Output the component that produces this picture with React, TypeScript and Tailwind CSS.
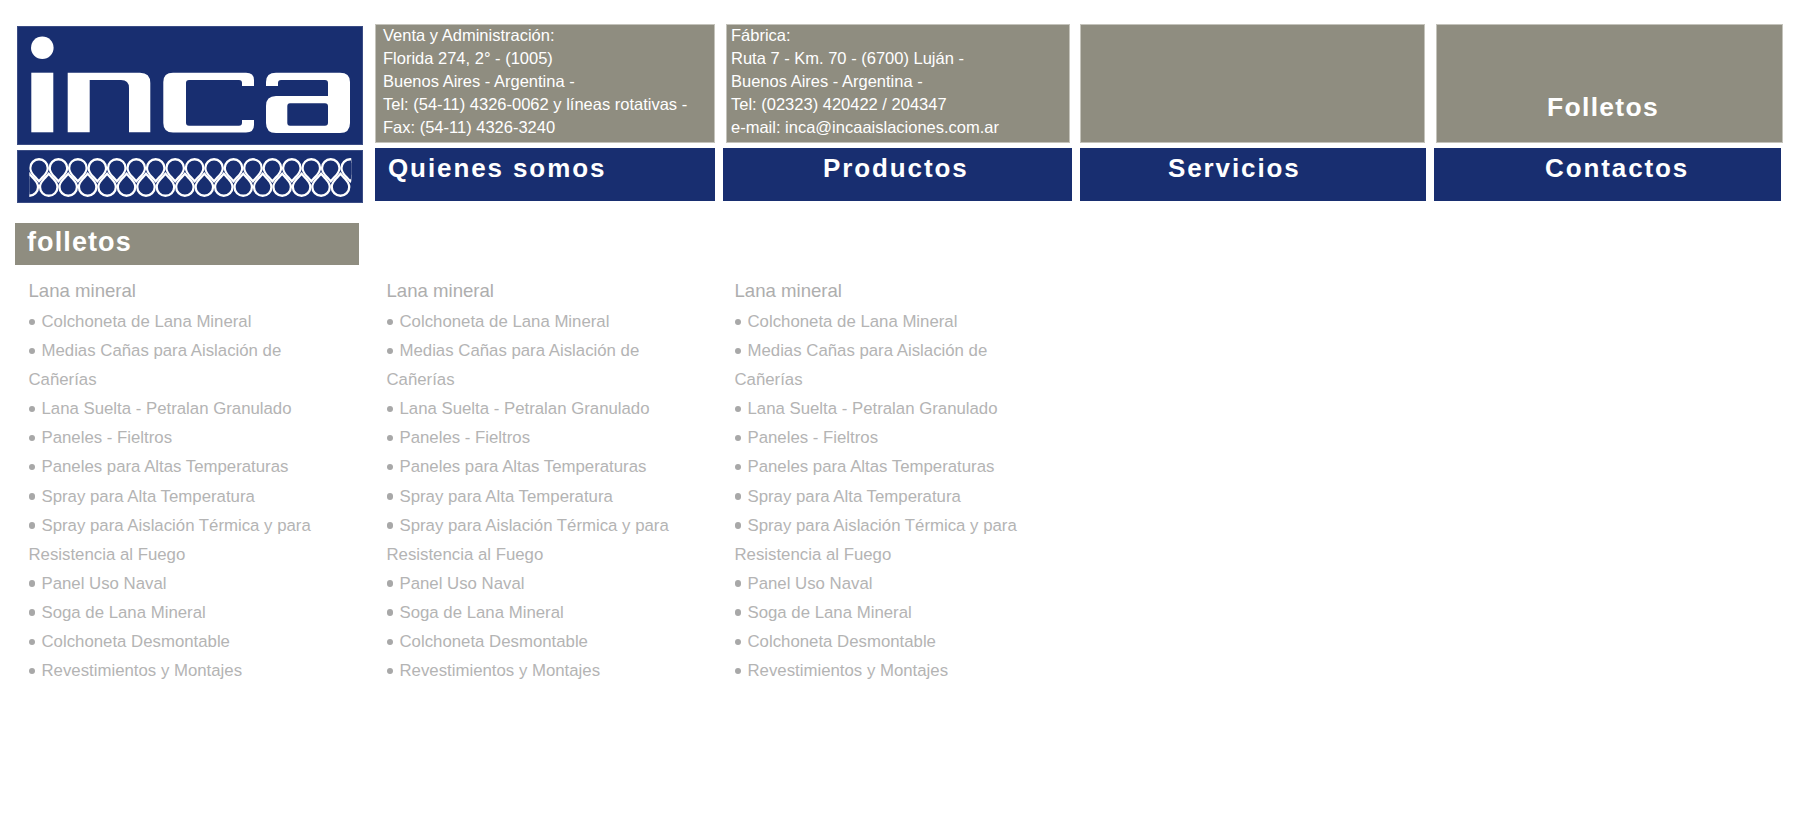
const navy = "bg-[#182e70]";

const linea = [
  "Colchoneta de Lana Mineral",
  "Medias Cañas para Aislación de Cañerías",
  "Lana Suelta - Petralan Granulado",
  "Paneles - Fieltros",
  "Paneles para Altas Temperaturas",
  "Spray para Alta Temperatura",
  "Spray para Aislación Térmica y para Resistencia al Fuego",
  "Panel Uso Naval",
  "Soga de Lana Mineral",
  "Colchoneta Desmontable",
  "Revestimientos y Montajes",
];

const Logo = () => (
  <div className={`${navy} h-[119px] w-[346px] border border-[#3a4c84]`}>
    <svg viewBox="18 27 344 117" className="block h-full w-full" fill="white">
      <circle cx="42.3" cy="47.7" r="11.3" />
      <rect x="31.3" y="72.7" width="22" height="59.6" />
      <path d="M67.7 132.3V72.7H140Q150.3 72.7 150.3 83V132.3H129V88Q129 80 121 80H89.7V132.3Z" />
      <path d="M173 72.7H246Q254 72.7 254 80V86H242V83Q242 80 239 80H189Q186 80 186 83V122.7Q186 125.7 189 125.7H239Q242 125.7 242 122.7V120H254V125Q254 132.5 246 132.5H173Q163.3 132.5 163.3 123V82Q163.3 72.7 173 72.7Z" />
      <path
        fillRule="evenodd"
        d="M266 86V82Q266 72.7 276 72.7H340Q350 72.7 350 82V123Q350 133 340 133H276Q266 133 266 123V106Q266 96 276 96H328V83Q328 80 325 80H281Q278 80 278 83V86ZM290 103.3H325Q328 103.3 328 106.3V122.7Q328 125.7 325 125.7H290Q287.3 125.7 287.3 122.7V106.3Q287.3 103.3 290 103.3Z"
      />
    </svg>
  </div>
);

// malla del logo: gotas en dos filas, primero el contorno blanco y encima el hueco azul
const Malla = () => {
  const r = 7.6;
  const arriba = Array.from({ length: 17 }, (_, i) => 39 + i * 19.45);
  const abajo = Array.from({ length: 17 }, (_, i) => 29.3 + i * 19.45);
  const gotas = [
    ...arriba.map(
      (x) =>
        `M${x - r} 168A${r} ${r} 0 1 1 ${x + r} 168C${x + r} 172.5 ${x + 3} 176 ${x} 179.5C${x - 3} 176 ${x - r} 172.5 ${x - r} 168Z`,
    ),
    ...abajo.map(
      (x) =>
        `M${x - r} 187A${r} ${r} 0 1 0 ${x + r} 187C${x + r} 182.5 ${x + 3} 179 ${x} 175.5C${x - 3} 179 ${x - r} 182.5 ${x - r} 187Z`,
    ),
  ];
  return (
    <div className={`${navy} mt-[5px] h-[53px] w-[346px] border border-[#3a4c84]`}>
      <svg viewBox="18 151 344 51" className="block h-full w-full">
        <defs>
          <clipPath id="malla">
            <rect x="29.3" y="155" width="322" height="44" />
          </clipPath>
        </defs>
        <g clipPath="url(#malla)">
          {gotas.map((d) => (
            <path key={d} d={d} fill="white" stroke="white" strokeWidth="4.6" />
          ))}
          {gotas.map((d) => (
            <path key={d} d={d} fill="#182e70" />
          ))}
        </g>
      </svg>
    </div>
  );
};

const Gris = ({ width, children }: { width: string; children?: React.ReactNode }) => (
  <div className={`${width} h-[119px] border border-[#c4c3bb] bg-[#8f8d80] text-[16.5px] leading-[23px] text-white`}>
    {children}
  </div>
);

const Azul = ({ width, children, align }: { width: string; children: React.ReactNode; align: string }) => (
  <div className={`${width} ${navy} ${align} h-[53px] pt-[4px] text-[26px] leading-[32px] font-bold tracking-[1.9px] text-white`}>
    {children}
  </div>
);

const Columna = ({ width }: { width: string }) => (
  <div className={width}>
    <h3 className="mb-[2px] text-[18.6px] leading-[29px] font-normal text-[#aeaeae]">Lana mineral</h3>
    <ul className="w-[300px] text-[16.8px] leading-[29.1px] text-[#b4b4b4]">
      {linea.map((item) => (
        <li key={item}>
          <span className="mr-[6.5px] inline-block size-[6.5px] rounded-full bg-[#a8a8a8] align-[2px]" />
          {item}
        </li>
      ))}
    </ul>
  </div>
);

export default function App() {
  return (
    <div className="min-h-[815px] bg-white font-['Liberation_Sans',Arial,sans-serif]">
      <header className="flex pl-[17px] pt-[24px]">
        <div className="mt-[2px]">
          <Logo />
          <Malla />
        </div>
        <div className="ml-[12px]">
          <div className="flex">
            <Gris width="w-[340px]">
              <p className="-mt-[1px] pl-[7px]">
                Venta y Administración:
                <br />
                Florida 274, 2° - (1005)
                <br />
                Buenos Aires - Argentina -
                <br />
                Tel: (54-11) 4326-0062 y líneas rotativas -
                <br />
                Fax: (54-11) 4326-3240
              </p>
            </Gris>
            <div className="ml-[11px]">
              <Gris width="w-[344px]">
                <p className="-mt-[1px] pl-[4px]">
                  Fábrica:
                  <br />
                  Ruta 7 - Km. 70 - (6700) Luján -
                  <br />
                  Buenos Aires - Argentina -
                  <br />
                  Tel: (02323) 420422 / 204347
                  <br />
                  e-mail: inca@incaaislaciones.com.ar
                </p>
              </Gris>
            </div>
            <div className="ml-[10px]">
              <Gris width="w-[345px]" />
            </div>
            <div className="ml-[11px]">
              <Gris width="w-[347px]">
                <p className="pl-[110px] pt-[66px] text-[26.5px] leading-[32px] font-bold tracking-[1.3px]">Folletos</p>
              </Gris>
            </div>
          </div>
          <nav className="mt-[5px] flex gap-[8px]">
            <Azul width="w-[340px]" align="pl-[13px]">Quienes somos</Azul>
            <Azul width="w-[349px]" align="pl-[100px]">Productos</Azul>
            <Azul width="w-[346px]" align="pl-[88px]">Servicios</Azul>
            <Azul width="w-[347px]" align="pl-[111px]">Contactos</Azul>
          </nav>
        </div>
      </header>

      <section className="ml-[15px] mt-[20px] h-[42px] w-[344px] bg-[#8f8d80] pl-[12px] text-[27px] leading-[39px] font-bold tracking-[1.1px] text-white">
        folletos
      </section>

      <main className="flex pl-[28.5px] pt-[11px]">
        <Columna width="w-[358px]" />
        <Columna width="w-[348px]" />
        <Columna width="w-[340px]" />
      </main>
    </div>
  );
}
